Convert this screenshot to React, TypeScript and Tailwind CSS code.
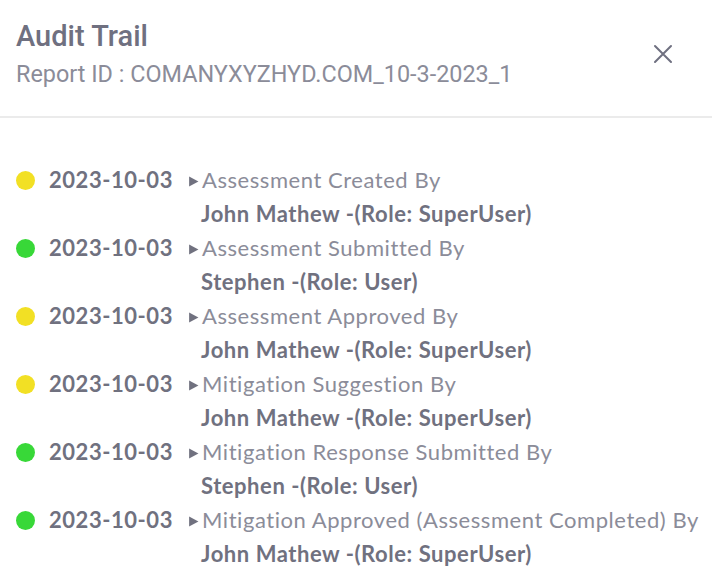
import React from "react";

const rows = [
  { color: "bg-[#f2e024]", action: "Assessment Created By", who: "John Mathew -(Role: SuperUser)" },
  { color: "bg-[#38d838]", action: "Assessment Submitted By", who: "Stephen -(Role: User)" },
  { color: "bg-[#f2e024]", action: "Assessment Approved By", who: "John Mathew -(Role: SuperUser)" },
  { color: "bg-[#f2e024]", action: "Mitigation Suggestion By", who: "John Mathew -(Role: SuperUser)" },
  { color: "bg-[#38d838]", action: "Mitigation Response Submitted By", who: "Stephen -(Role: User)" },
  { color: "bg-[#38d838]", action: "Mitigation Approved (Assessment Completed) By", who: "John Mathew -(Role: SuperUser)" },
];

export default function App() {
  return (
    <div className="w-[712px] h-[588px] bg-white overflow-hidden" style={{ fontFamily: "Lato, 'Noto Sans', sans-serif" }}>
      <div className="flex justify-between items-start pl-[16px] pr-[38px] pt-[19px] h-[118px] border-b-2 border-[#ebebeb]" style={{ fontFamily: "Roboto, sans-serif" }}>
        <div>
          <div className="text-[29px] leading-[35px] font-medium text-[#6f7080]">Audit Trail</div>
          <div className="mt-[5px] text-[23.4px] leading-[30px] text-[#8b8c99]">Report ID : COMANYXYZHYD.COM_10-3-2023_1</div>
        </div>
        <svg className="mt-[24px]" width="22" height="22" viewBox="0 0 22 22" fill="none" stroke="#6f7080" strokeWidth="2" strokeLinecap="round">
          <path d="M3 3L19 19M19 3L3 19" />
        </svg>
      </div>
      <div className="pt-[45px] flex flex-col">
        {rows.map((r, i) => (
          <div key={i} className="grid grid-cols-[49px_139px_1fr] leading-[34px] text-[22px] tracking-[0.55px]">
            <div className="flex items-center pl-[16px]">
              <div className={`w-[19px] h-[19px] rounded-full ${r.color}`} />
            </div>
            <div className="font-bold text-[#70717f]">2023-10-03</div>
            <div className="flex items-center text-[#8b8c99] whitespace-nowrap">
              <svg width="11" height="11" viewBox="0 0 10 10" className="mr-[3px] mt-[2px] shrink-0">
                <path d="M1 0.5L9.5 5L1 9.5Z" fill="#70717f" />
              </svg>
              <span>{r.action}</span>
            </div>
            <div className="col-start-3 pl-[13px] font-bold text-[#70717f]">{r.who}</div>
          </div>
        ))}
      </div>
    </div>
  );
}
